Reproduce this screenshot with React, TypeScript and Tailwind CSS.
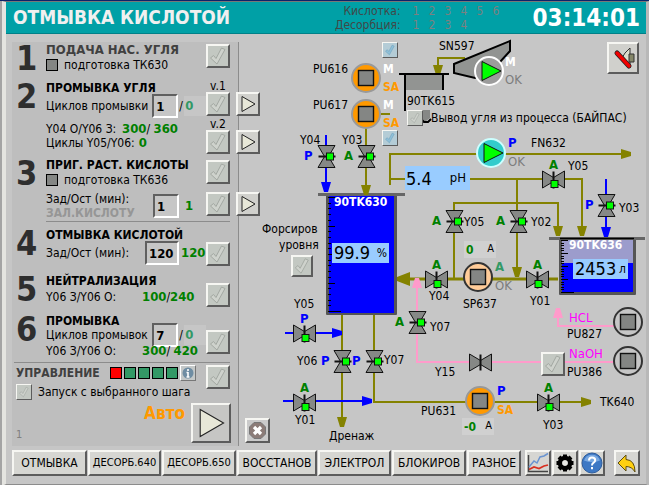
import React from "react";
import { clsx } from "clsx";

const BEVEL =
  "border-2 border-t-[#f6f6f2] border-l-[#f6f6f2] border-r-[#5c5c5c] border-b-[#5c5c5c]";

/* ---------- small controls ---------- */

function CheckGlyph({ blue = false }: { blue?: boolean }) {
  return (
    <svg viewBox="0 0 20 20" className="pointer-events-none h-full w-full" aria-hidden="true">
      <path
        d="M2.5 12L5.5 9.5L8 12.5L13.5 2L17 3.5L9 18Z"
        fill={blue ? "#8fc0d8" : "#ced2cc"}
        stroke={blue ? "#6fa3c0" : "#a3a8a2"}
        strokeWidth="1"
        strokeLinejoin="round"
      />
    </svg>
  );
}

function CheckButton({ label, size = "size-6" }: { label: string; size?: string }) {
  return (
    <button type="button" aria-label={label} className={clsx("shrink-0 bg-[#c3c8c2]", BEVEL, size)}>
      <CheckGlyph />
    </button>
  );
}

function TickBox({ id, label, blue = false }: { id: string; label?: string; blue?: boolean }) {
  return (
    <span className="relative block size-4 shrink-0">
      <input
        id={id}
        type="checkbox"
        aria-label={label}
        className={clsx("block size-4 appearance-none border border-t-[#f6f6f2] border-l-[#f6f6f2] border-r-[#5c5c5c] border-b-[#5c5c5c]", blue ? "bg-[#b4ccd6]" : "bg-[#c3c8c2]")}
      />
      <span className="pointer-events-none absolute inset-0.5">
        <CheckGlyph blue={blue} />
      </span>
    </span>
  );
}

function PlayButton({ label, big = false }: { label: string; big?: boolean }) {
  return (
    <button
      type="button"
      aria-label={label}
      className={clsx("shrink-0", BEVEL, big ? "size-10 bg-[#c6c6c4]" : "size-6 bg-[#d0d0cc]")}
    >
      <svg viewBox="0 0 20 20" className="h-full w-full" aria-hidden="true">
        <path d="M4 2.5 L17 10 L4 17.5 Z" fill="#e8e8d8" stroke="#222" strokeWidth={big ? 0.6 : 1} />
      </svg>
    </button>
  );
}

function NumberBox({ id, value, wide = false }: { id: string; value: string; wide?: boolean }) {
  return (
    <input
      id={id}
      defaultValue={value}
      className={clsx(
        "h-6 shrink-0 border-2 border-t-[#606060] border-l-[#606060] border-r-white border-b-white bg-[#c6c6c6] px-0.5 text-[13px] font-bold",
        wide ? "w-[34px]" : "w-[26px]",
      )}
    />
  );
}

/* ---------- left panel ---------- */

function Step({
  n,
  className,
  title,
  dim = false,
  children,
  actions,
}: {
  n: number;
  className: string;
  title: string;
  dim?: boolean;
  children: React.ReactNode;
  actions: React.ReactNode;
}) {
  return (
    <section className={clsx("grid grid-cols-[34px_160px_1fr]", className)}>
      <span className="pl-1 text-[34px] leading-8 font-bold text-[#2e2e2e]">{n}</span>
      <div className="whitespace-nowrap">
        <h2 className={clsx("leading-4 font-bold", dim ? "text-[13px] text-[#404040]" : "text-[12px]")}>{title}</h2>
        {children}
      </div>
      <div className="flex flex-col">{actions}</div>
    </section>
  );
}

function Prep({ name }: { name: string }) {
  return (
    <div className="flex h-3.5 items-center gap-1.5">
      <span className="size-3 border border-black bg-[#848684]" />
      подготовка {name}
    </div>
  );
}

function Green({ children }: { children: React.ReactNode }) {
  return <b className="text-[13px] text-[#008000]">{children}</b>;
}

function Zero() {
  return <b className="flex h-5 w-[22px] items-center bg-[#c6c6c6] pl-px text-[13px] text-[#339966]">0</b>;
}

function StepsPanel() {
  return (
    <aside className="relative z-10 w-[227px] shrink-0 border-r border-[#8c8c8c] bg-[#bebebe]">
      <Step n={1} className="min-h-[38px]" title="ПОДАЧА НАС. УГЛЯ" dim
        actions={<div className="pt-0.5"><CheckButton label="Шаг 1" /></div>}>
        <Prep name="ТК630" />
      </Step>

      <Step n={2} className="min-h-[77px]" title="ПРОМЫВКА УГЛЯ"
        actions={
          <>
            <span className="h-3 pl-1 leading-3">v.1</span>
            <div className="flex gap-1.5"><CheckButton label="Шаг 2, вариант 1" /><PlayButton label="Пуск шага 2, вариант 1" /></div>
            <span className="h-3.5 pl-1 leading-4">v.2</span>
            <div className="flex gap-1.5"><CheckButton label="Шаг 2, вариант 2" /><PlayButton label="Пуск шага 2, вариант 2" /></div>
          </>
        }>
        <div className="flex h-5 items-center">
          <label htmlFor="wash2" className="w-[107px]">Циклов промывки</label>
          <NumberBox id="wash2" value="1" />
          <span className="w-1.5 text-center">/</span>
          <Zero />
        </div>
        <div className="mt-1.5 flex h-3.5 items-center"><span className="w-[76px]">Y04 О/Y06 З:</span><Green>300</Green>/&nbsp;<Green>360</Green></div>
        <div className="flex h-3.5 items-center gap-1">Циклы Y05/Y06: <Green>0</Green></div>
      </Step>

      <Step n={3} className="min-h-[64px]" title="ПРИГ. РАСТ. КИСЛОТЫ"
        actions={
          <div className="flex flex-col gap-2 pt-[3px]">
            <CheckButton label="Шаг 3" />
            <div className="flex gap-1.5"><CheckButton label="Залить кислоту" /><PlayButton label="Пуск шага 3" /></div>
          </div>
        }>
        <Prep name="ТК636" />
        <div className="mt-[5px] flex items-center">
          <div className="flex w-[107px] flex-col">
            <label htmlFor="time3" className="leading-[14px]">Зад/Ост (мин):</label>
            <b className="leading-[14px] text-[#969696]">ЗАЛ.КИСЛОТУ</b>
          </div>
          <NumberBox id="time3" value="1" />
          <span className="pl-1.5"><Green>1</Green></span>
        </div>
      </Step>
      <hr className="mr-2 ml-[34px] border-[#8c8c8c]" />

      <Step n={4} className="min-h-12 pt-[5px]" title="ОТМЫВКА КИСЛОТОЙ"
        actions={<div className="pt-[15px]"><CheckButton label="Шаг 4" /></div>}>
        <div className="flex h-5 items-center">
          <label htmlFor="time4" className="w-[99px]">Зад/Ост (мин):</label>
          <NumberBox id="time4" value="120" wide />
          <span className="pl-0.5"><Green>120</Green></span>
        </div>
      </Step>

      <Step n={5} className="min-h-10 pt-[3px]" title="НЕЙТРАЛИЗАЦИЯ"
        actions={<div className="pt-2.5"><CheckButton label="Шаг 5" /></div>}>
        <div className="flex h-4 items-center"><span className="w-24">Y06 З/Y06 О:</span><Green>100</Green>/<Green>240</Green></div>
      </Step>

      <Step n={6} className="min-h-[52px] pt-[3px]" title="ПРОМЫВКА"
        actions={<div className="pt-[17px]"><CheckButton label="Шаг 6" /></div>}>
        <div className="flex h-3 items-center">
          <label htmlFor="wash6" className="w-[107px]">Циклов промывок</label>
          <NumberBox id="wash6" value="7" />
          <span className="w-1.5 text-center">/</span>
          <Zero />
        </div>
        <div className="mt-0.5 flex h-4 items-center"><span className="w-24">Y06 З/Y06 О:</span><Green>300</Green>/&nbsp;<Green>420</Green></div>
      </Step>
      <hr className="mr-2 ml-0.5 border-[#8c8c8c]" />

      <section className="grid grid-cols-[1fr_24px] pt-0.5 pr-2 pl-1">
        <div>
          <div className="flex h-4 items-center">
            <h2 className="w-[94px] text-[12px] font-bold text-[#404040]">УПРАВЛЕНИЕ</h2>
            <div className="flex gap-0.5">
              <span className="size-3 border border-black bg-[#ff0000]" />
              <span className="size-3 border border-black bg-[#339966]" />
              <span className="size-3 border border-black bg-[#339966]" />
              <span className="size-3 border border-black bg-[#339966]" />
              <span className="size-3 border border-black bg-[#339966]" />
            </div>
            <button type="button" aria-label="Информация" className="ml-0.5 size-4 border border-t-white border-l-white border-r-[#777] border-b-[#777] bg-[#c4c8c8]">
              <svg viewBox="0 0 14 14" className="h-full w-full" aria-hidden="true">
                <circle cx="7" cy="7" r="5.5" fill="#6f8da3" />
                <path d="M7 3v2M7 6v5M5.5 6.5H7M5.5 11h3" stroke="#fff" strokeWidth="1.6" />
              </svg>
            </button>
          </div>
          <div className="mt-0.5 flex items-center gap-1.5">
            <TickBox id="from-step" />
            <label htmlFor="from-step" className="whitespace-nowrap">Запуск с выбранного шага</label>
          </div>
        </div>
        <CheckButton label="Управление" />
      </section>
      <div className="flex items-start justify-end pt-0.5 pr-[7px] pl-1">
        <span className="self-end text-[11px] text-[#808080]">1</span>
        <span className="ml-auto pr-1.5 text-[17px] leading-5 font-bold text-[#ff9900]">Авто</span>
        <PlayButton big label="Пуск" />
      </div>
    </aside>
  );
}

/* ---------- process diagram ---------- */

const OX = 240;
const OY = 36;

const TONES = {
  black: "text-[12px] text-black",
  white: "text-[12px] font-bold text-white",
  green: "text-[13px] font-bold text-[#008000]",
  sea: "text-[13px] font-bold text-[#339966]",
  blue: "text-[13px] font-bold text-[#0000ff]",
  orange: "text-[12px] font-bold text-[#ff9900]",
  gray: "text-[13px] text-[#7c7c7c]",
  magenta: "text-[13px] text-[#ff00ff]",
};

type Label = [x: number, y: number, text: string, tone?: keyof typeof TONES];

const LABELS: Label[] = [
  [313, 69, "PU616"], [313, 105, "PU617"],
  [383, 69, "M", "white"], [383, 87, "SA", "orange"],
  [383, 105, "M", "white"], [383, 123, "SA", "orange"],
  [439, 46, "SN597"], [505, 62, "M", "white"], [505, 80, "OK", "gray"],
  [407, 101, "90TK615"],
  [300, 140, "Y04"], [304, 156, "P", "blue"], [342, 140, "Y03"], [344, 156, "A", "green"],
  [508, 143, "P", "blue"], [531, 143, "FN632"], [508, 162, "OK", "gray"],
  [549, 165, "A", "green"], [568, 166, "Y05"],
  [585, 205, "P", "blue"], [619, 208, "Y03"],
  [432, 221, "A", "green"], [464, 222, "Y05"], [496, 221, "A", "green"], [531, 222, "Y02"],
  [334, 202, "90TK630", "white"], [569, 245, "90TK636", "white"],
  [262, 229, "Форсиров"], [279, 245, "уровня"],
  [294, 304, "Y05"], [300, 319, "P", "blue"],
  [395, 322, "A", "green"], [430, 327, "Y07"],
  [432, 265, "A", "green"], [429, 296, "Y04"],
  [297, 361, "Y06"], [321, 361, "P", "blue"], [352, 361, "P", "blue"], [384, 360, "Y07"],
  [495, 267, "A", "sea"], [495, 286, "OK", "gray"], [463, 304, "SP637"],
  [533, 265, "A", "green"], [530, 301, "Y01"],
  [569, 318, "HCL", "magenta"], [567, 334, "PU827"],
  [569, 354, "NaOH", "magenta"], [567, 372, "PU386"],
  [435, 372, "Y15"], [421, 411, "PU631"],
  [497, 391, "P", "blue"], [497, 410, "SA", "orange"],
  [544, 388, "A", "green"], [543, 425, "Y03"], [600, 402, "TK640"],
  [329, 436, "Дренаж"], [300, 388, "A", "green"], [295, 420, "Y01"],
];

function At({ x, y, children }: { x: number; y: number; children: React.ReactNode }) {
  return (
    <div className="absolute" style={{ left: x - OX, top: y - OY }}>
      {children}
    </div>
  );
}

function Valve({ x, y, vertical = false, plain = false }: { x: number; y: number; vertical?: boolean; plain?: boolean }) {
  return (
    <g transform={`translate(${x} ${y})`} stroke="#111" strokeWidth="1">
      <path
        d={vertical ? "M-8.5 -11H8.5L2 0L8.5 11H-8.5L-2 0Z" : "M-11 -8.5V8.5L0 2L11 8.5V-8.5L0 -2Z"}
        fill="#868886"
      />
      <path d={vertical ? "M-8 0H9" : plain ? "M0 -8V8" : "M0 -8V9"} strokeWidth="2" />
      {!plain && <rect x={vertical ? 0 : -2.5} y={vertical ? -3.5 : 1} width="7" height="7" fill="#00ff00" />}
    </g>
  );
}

function Motor({ x, y, fill, ring }: { x: number; y: number; fill: string; ring: string }) {
  return (
    <g>
      <circle cx={x} cy={y} r="14" fill={fill} stroke={ring} strokeWidth="2" />
      <rect x={x - 7.5} y={y - 7.5} width="15" height="15" fill="#848684" stroke="#111" strokeWidth="1.4" />
    </g>
  );
}

function Fan({ x, y, fill, ring }: { x: number; y: number; fill: string; ring: string }) {
  return (
    <g>
      <circle cx={x} cy={y} r="14" fill={fill} stroke={ring} strokeWidth="2" />
      <path d={`M${x - 7} ${y - 9.5}L${x + 12} ${y}L${x - 7} ${y + 9.5}Z`} fill="#00ff00" stroke="#111" />
    </g>
  );
}

function Ticks({ x, from, count, step, first = 0 }: { x: number; from: number; count: number; step: number; first?: number }) {
  return (
    <g stroke="#000" strokeWidth="1">
      {Array.from({ length: count }, (_, i) => (
        <path
          key={i}
          d={`M${x} ${Math.round(from + i * step) + 0.5}h${i === count - 1 ? 13 : (i - first) % 5 === 0 ? 7 : 3}`}
        />
      ))}
    </g>
  );
}

function Drawing() {
  return (
    <svg width="406" height="410" viewBox="240 36 406 410" className="absolute top-0 left-0" aria-hidden="true">
      {/* olive lines */}
      <g fill="none" stroke="#848200" strokeWidth="2">
        <path d="M381 114H390M366 127V186M465 58H438V66" />
        <path d="M390 185V154H622M390 179H405M470 179H582V227" />
        <path d="M517 179V267M454 279V203H558V227" />
        <path d="M342 315V418M374 315V402H582" />
        <path d="M409 279H558" strokeWidth="3" />
      </g>
      <g fill="#848200">
        <path d="M433 65h10l-3 10h-4ZM577 226h10l-3 10h-4ZM553 226h10l-3 10h-4ZM512 267h10l-3 10h-4ZM337 417h10l-3 10h-4Z" />
        <path d="M621 149v10l10-3v-4ZM581 397v10l10-3v-4ZM410 272v14l-13-5v-4Z" />
      </g>
      {/* blue lines */}
      <g fill="none" stroke="#0000ff" strokeWidth="2">
        <path d="M326 135V183M606 179V228M285 333H333M283 401H363" />
      </g>
      <path fill="#0000ff" d="M321 182h10l-3 10h-4ZM601 227h10l-3 10h-4ZM332 328v10l10-3v-4ZM362 396v10l10-3v-4Z" />
      {/* reagent lines */}
      <g fill="none" stroke="#ff9bcb" strokeWidth="2">
        <path d="M417 286V362H614M558 317V326H614" />
      </g>
      <path fill="#ff9bcb" d="M412 288h10l-3-10h-4ZM553 318h10l-3-10h-4Z" />

      {/* conveyor and hopper */}
      <path d="M454 64L510 41V51L500 62L475 78L454 73Z" fill="#929492" stroke="#000" strokeWidth="2" />
      <rect x="406" y="75" width="37" height="15" fill="#929492" />
      <path d="M399 74H449M405 74V111M443 74V90" stroke="#000" strokeWidth="2" />
      <path d="M421 110H430V118L426 121H421Z" fill="#868886" />
      <path d="M421 119L424 122H428L431 119" fill="none" stroke="#000" strokeWidth="2" />

      {/* tank 630 */}
      <rect x="326" y="194" width="71" height="121" rx="1" fill="#555" />
      <rect x="329" y="196" width="65" height="117" fill="#0000ff" />
      <path d="M318 194.5H405" stroke="#666" strokeWidth="3" />
      <Ticks x={328} from={197} count={21} step={5.7} />
      <path d="M361 185h10l-3 10h-4Z" fill="#848200" />

      {/* tank 636 */}
      <rect x="559" y="239" width="77" height="56" rx="1" fill="#555" />
      <rect x="562" y="240" width="71" height="24" fill="#9c9ccc" />
      <rect x="562" y="263" width="71" height="29" fill="#0000ff" />
      <path d="M549 238.5H645" stroke="#666" strokeWidth="3" />
      <path d="M560 238.5H634" stroke="#000" strokeWidth="1.5" />
      <Ticks x={561} from={240} count={21} step={2.6} />

      <Motor x={366} y={78} fill="#ff9900" ring="#999" />
      <Motor x={366} y={114} fill="#ff9900" ring="#999" />
      <Motor x={480} y={401} fill="#ff9900" ring="#999" />
      <Motor x={478} y={277} fill="#ffcc99" ring="#333" />
      <Motor x={628} y={322} fill="#c6c6c6" ring="#333" />
      <Motor x={628} y={361} fill="#c6c6c6" ring="#333" />
      <Fan x={489} y={71} fill="#9c9c9c" ring="#fff" />
      <Fan x={491} y={153} fill="#33cccc" ring="#ccffff" />

      <Valve vertical x={326.5} y={156.5} />
      <Valve vertical x={366.5} y={156.5} />
      <Valve vertical x={454.5} y={221.5} />
      <Valve vertical x={518.5} y={221.5} />
      <Valve vertical x={606.5} y={205.5} />
      <Valve vertical x={417.5} y={322.5} />
      <Valve vertical x={342.5} y={361.5} />
      <Valve vertical x={374.5} y={361.5} />
      <Valve x={553.5} y={179.5} />
      <Valve x={436.5} y={279.5} />
      <Valve x={537.5} y={279.5} />
      <Valve x={304.5} y={333.5} />
      <Valve x={304.5} y={402.5} />
      <Valve x={548.5} y={402.5} />
      <Valve x={480.5} y={362.5} plain />
    </svg>
  );
}

function Reading({ value, unit, width }: { value: string; unit: string; width: string }) {
  return (
    <div className={clsx("flex items-center justify-between bg-[#99ccff] px-0.5", width)}>
      <span className="text-[18px] leading-5">{value}</span>
      <span>{unit}</span>
    </div>
  );
}

function Amps({ value }: { value: string }) {
  return (
    <div className="flex h-[17px] w-8 items-center justify-between bg-[#d0d0d0] px-0.5 text-[11px]">
      <b className="text-[12px] text-[#008000]">{value}</b>
      <span>А</span>
    </div>
  );
}

function Diagram() {
  return (
    <main className="relative -mt-1.5 min-h-[410px] flex-1">
      <div className="absolute top-0 left-px">
        <Drawing />
        {LABELS.map(([x, y, text, tone = "black"], i) => (
          <span
            key={i}
            className={clsx("absolute leading-4 whitespace-nowrap", TONES[tone])}
            style={{ left: x - OX, top: y - OY - 8 }}
          >
            {text}
          </span>
        ))}
        <At x={405} y={166}>
          <div className="flex h-6 w-[65px] items-center justify-between bg-[#99ccff] pr-1 pl-px">
            <span className="text-[18px]">5.4</span>
            <span className="text-[13px]">pH</span>
          </div>
        </At>
        <At x={332} y={243}><Reading value="99.9" unit="%" width="w-[57px]" /></At>
        <At x={573} y={259}><Reading value="2453" unit="л" width="w-[55px]" /></At>
        <At x={464} y={241}><Amps value="0" /></At>
        <At x={462} y={418}><Amps value="-0" /></At>

        <At x={382} y={42}><TickBox id="pu616" label="PU616" blue /></At>
        <At x={382} y={130}><TickBox id="pu617" label="PU617" blue /></At>
        <At x={407} y={109}>
          <div className="flex items-center gap-2">
            <TickBox id="bypass" />
            <label htmlFor="bypass" className="whitespace-nowrap">Вывод угля из процесса (БАЙПАС)</label>
          </div>
        </At>
        <At x={291} y={255}><CheckButton label="Форсировать уровень" size="size-[22px]" /></At>
        <At x={541} y={352}><CheckButton label="NaOH" /></At>
        <At x={607} y={42}>
          <button type="button" aria-label="Отключить звук" className={clsx("size-8 bg-[#d0d0cc]", BEVEL)}>
            <svg viewBox="0 0 28 28" className="h-full w-full" aria-hidden="true">
              <path d="M13 14L16 9L21 4V24L16 18Z" fill="#dcdccc" stroke="#333" />
              <path d="M20 10H25V18H20Z" fill="#848668" stroke="#333" />
              <path d="M8 9L20 22" stroke="#222" strokeWidth="5" strokeLinecap="round" />
              <path d="M8 9L20 22" stroke="#f00000" strokeWidth="3.5" strokeLinecap="round" />
            </svg>
          </button>
        </At>
        <At x={245} y={418}>
          <button type="button" aria-label="Стоп" className={clsx("size-[25px] bg-[#cacaca]", BEVEL)}>
            <svg viewBox="0 0 21 21" className="h-full w-full" aria-hidden="true">
              <path d="M7 2.5H14L18.5 7V14L14 18.5H7L2.5 14V7Z" fill="#8c7c78" stroke="#777" />
              <path d="M7 7L14 14M14 7L7 14" stroke="#fff" strokeWidth="3.2" />
            </svg>
          </button>
        </At>
      </div>
    </main>
  );
}

/* ---------- header and navigation ---------- */

function Header() {
  return (
    <header className="flex h-8 items-center border-b border-[#008088] bg-[#00a0a6] pr-1.5 pl-[7px]">
      <h1 className="text-[19px] font-bold whitespace-nowrap text-[#f0f0f0]">ОТМЫВКА КИСЛОТОЙ</h1>
      <div className="ml-auto grid grid-cols-[auto_104px] gap-x-3 text-right leading-[14px] text-[#404848]">
        <span>Кислотка:</span>
        <span className="grid grid-cols-[repeat(6,16px)] text-left text-[#7c8080]">
          {[1, 2, 3, 4, 5, 6].map((n) => <span key={n}>{n}</span>)}
        </span>
        <span>Десорбция:</span>
        <span className="grid grid-cols-[repeat(6,16px)] text-left text-[#7c8080]">
          {[1, 2, 3, 4].map((n) => <span key={n}>{n}</span>)}
        </span>
      </div>
      <time className="ml-4 text-[24px] font-bold text-white">03:14:01</time>
    </header>
  );
}

const TABS = [
  ["ОТМЫВКА", "basis-[75px] text-[12px]"],
  ["ДЕСОРБ.640", "basis-[73px] text-[11px]"],
  ["ДЕСОРБ.650", "basis-[74px] text-[11px]"],
  ["ВОССТАНОВ", "basis-[80px] text-[12px]"],
  ["ЭЛЕКТРОЛ", "basis-[73px] text-[12px]"],
  ["БЛОКИРОВ", "basis-[74px] text-[12px]"],
  ["РАЗНОЕ", "basis-[54px] text-[12px]"],
];

function IconButton({ label, className, children }: { label: string; className?: string; children: React.ReactNode }) {
  return (
    <button type="button" aria-label={label} className={clsx("h-[26px] w-[26px] shrink-0 bg-[#d6d6d2]", BEVEL, className)}>
      <svg viewBox="0 0 22 22" className="h-full w-full" aria-hidden="true">{children}</svg>
    </button>
  );
}

function BottomBar() {
  return (
    <nav className="flex gap-px pt-1 pr-[6px] pb-2 pl-1.5">
      {TABS.map(([name, cls]) => (
        <button key={name} type="button" className={clsx("flex h-[26px] min-w-0 grow items-center justify-center bg-[#d6d6d2] whitespace-nowrap", BEVEL, cls)}>
          {name}
        </button>
      ))}
      <IconButton label="Графики" className="ml-[3px]">
        <path d="M1.5 3V19.5H21" fill="none" stroke="#444" strokeWidth="1.5" />
        <path d="M2 15L7 9L10 11L13 5L17 4L21 1.5" fill="none" stroke="#6a94d0" strokeWidth="1.5" />
        <path d="M2 17.5L7 15L12 16.5L17 14L21 13" fill="none" stroke="#d83020" strokeWidth="1.8" />
      </IconButton>
      <IconButton label="Настройки">
        <circle cx="11" cy="11" r="5" fill="none" stroke="#000" strokeWidth="4.5" />
        <path d="M11 2.5V6M11 16V19.5M2.5 11H6M16 11H19.5M5 5L7.5 7.5M14.5 14.5L17 17M17 5L14.5 7.5M5 17L7.5 14.5" stroke="#000" strokeWidth="4" />
        <circle cx="11" cy="11" r="2.7" fill="#e8e8e4" />
      </IconButton>
      <IconButton label="Справка">
        <circle cx="11" cy="11" r="10" fill="#3d78c4" stroke="#2d5c9c" />
        <path d="M3 8.5A8.5 8.5 0 0 1 19 8.5Q11 12 3 8.5Z" fill="#78a8e0" />
        <path d="M8 8.5Q8 5.5 11 5.5Q14.2 5.5 14.2 8.2Q14.2 10 12.2 11Q11 11.8 11 13.4M11 15V17.2" fill="none" stroke="#fff" strokeWidth="2" />
      </IconButton>
      <IconButton label="Назад" className="ml-2">
        <path d="M2 11L10 3V7.5Q19 8 19 20Q16 14.5 10 14.5V19Z" fill="#ffd010" stroke="#5c4c10" strokeLinejoin="round" />
      </IconButton>
    </nav>
  );
}

export default function App() {
  return (
    <div className="flex min-h-screen border-t border-[#0a246a] bg-[#a4a4a4] pl-0.5 font-['DejaVu_Sans_Condensed','DejaVu_Sans',sans-serif] text-[12px] text-black">
      <div className="min-w-0 flex-1 border-t border-r-3 border-b-2 border-l-4 border-t-[#777] border-r-[#b8b8b8] border-b-[#8c8c8c] border-l-[#e4e4e0] bg-[#c6c6c6]">
        <Header />
        <div className="flex pt-2 pl-1.5">
          <StepsPanel />
          <Diagram />
        </div>
        <BottomBar />
      </div>
    </div>
  );
}
